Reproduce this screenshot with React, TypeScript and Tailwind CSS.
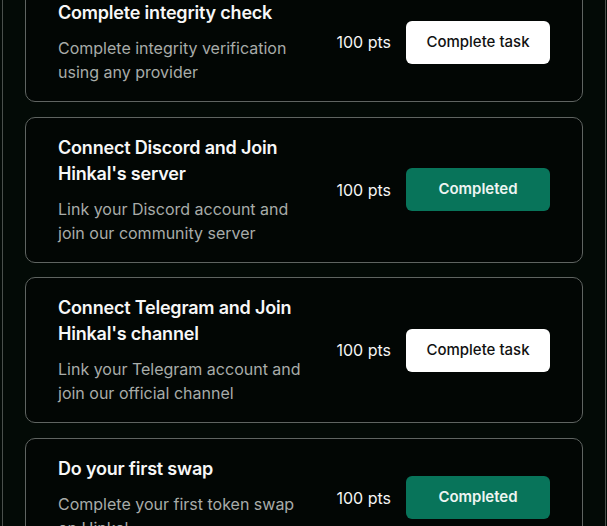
const tasks = [
  {
    title: "Complete integrity check",
    desc: "Complete integrity verification using any provider",
    pts: 100,
    done: false,
  },
  {
    title: "Connect Discord and Join Hinkal's server",
    desc: "Link your Discord account and join our community server",
    pts: 100,
    done: true,
  },
  {
    title: "Connect Telegram and Join Hinkal's channel",
    desc: "Link your Telegram account and join our official channel",
    pts: 100,
    done: false,
  },
  {
    title: "Do your first swap",
    desc: "Complete your first token swap on Hinkal",
    pts: 100,
    done: true,
  },
];

export default function App() {
  return (
    <div
      className="h-[526px] w-full overflow-hidden bg-[#030a06]"
      style={{ fontFamily: "Inter, 'Noto Sans', sans-serif" }}
    >
      <div className="ml-[2px] mr-[1px] h-[526px] overflow-hidden border-x border-[#4a504c] px-[22px]">
        {/* Task list - scrolled a bit */}
        <div className="-mt-[18px] flex flex-col gap-[14.5px]">
          {tasks.map((task, i) => (
            <div
              key={i}
              className="flex items-center gap-6 rounded-[10px] border border-[#5f6461] bg-[#020604] py-[17px] pl-8 pr-8"
            >
              <div className="flex-1">
                <h3 className="text-[18px] font-semibold leading-[26px] tracking-[-0.2px] text-[#f7f7f7]">
                  {task.title}
                </h3>
                <p className="mt-[10px] text-[16px] leading-6 text-[#a8aca9]">{task.desc}</p>
              </div>
              <div className="flex shrink-0 items-center gap-[15px]">
                <span className="text-[16px] text-[#f5f5f5]">{task.pts} pts</span>
                {task.done ? (
                  <button className="h-[43px] w-[144px] rounded-md bg-[#08745a] text-[15px] font-semibold text-[#eef5f2]">
                    Completed
                  </button>
                ) : (
                  <button className="h-[43px] w-[144px] rounded-md bg-white text-[15px] font-medium text-[#111]">
                    Complete task
                  </button>
                )}
              </div>
            </div>
          ))}
        </div>
      </div>
    </div>
  );
}
